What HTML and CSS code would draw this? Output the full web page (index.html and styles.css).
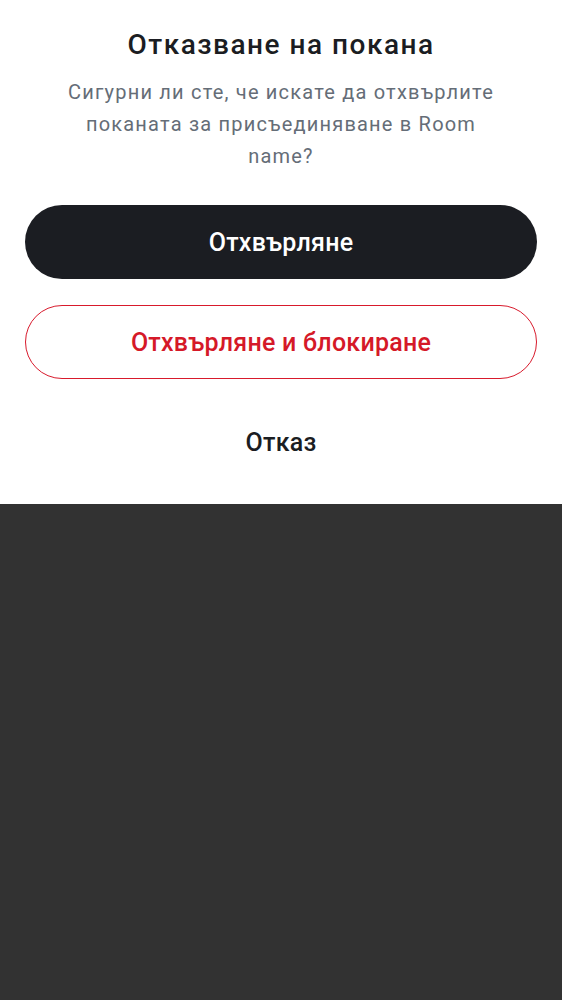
FILE: index.html
```html
<!DOCTYPE html>
<html lang="bg">
<head>
<meta charset="utf-8">
<link rel="stylesheet" href="styles.css">
</head>
<body>
<div class="sheet">
  <h1 class="title">Отказване на покана</h1>
  <p class="subtitle">Сигурни ли сте, че искате да отхвърлите поканата за присъединяване в Room name?</p>
  <div class="actions">
    <button class="btn btn-primary">Отхвърляне</button>
    <button class="btn btn-danger">Отхвърляне и блокиране</button>
    <button class="btn btn-text">Отказ</button>
  </div>
</div>
<div class="backdrop"></div>
</body>
</html>
```
FILE: styles.css
```css
html, body {
  margin: 0;
  padding: 0;
  height: 100%;
}
body {
  background: #323232;
  font-family: Roboto, "Noto Sans", sans-serif;
  display: flex;
  flex-direction: column;
}
.sheet {
  background: #ffffff;
  padding: 29px 25px 25px;
  display: flex;
  flex-direction: column;
  align-items: stretch;
}
.title {
  margin: 0;
  font-size: 28px;
  line-height: 32px;
  font-weight: 500;
  letter-spacing: 1.5px;
  color: #1b1d22;
  text-align: center;
}
.subtitle {
  margin: 15px 30px 0;
  font-size: 20px;
  line-height: 32px;
  font-weight: 400;
  letter-spacing: 1.2px;
  color: #656d77;
  text-align: center;
}
.actions {
  margin-top: 33px;
  display: flex;
  flex-direction: column;
  gap: 26px;
}
.btn {
  height: 74px;
  border-radius: 37px;
  font-family: Roboto, "Noto Sans", sans-serif;
  font-size: 25px;
  font-weight: 500;
  letter-spacing: 0.25px;
  border: 1px solid transparent;
  background: transparent;
  padding: 0;
}
.btn-primary {
  background: #1b1d22;
  color: #ffffff;
}
.btn-danger {
  border-color: #d81a2c;
  color: #d51928;
  background: #ffffff;
}
.btn-text {
  color: #1b1d22;
}
.backdrop {
  flex: 1;
  background: #323232;
}
```
